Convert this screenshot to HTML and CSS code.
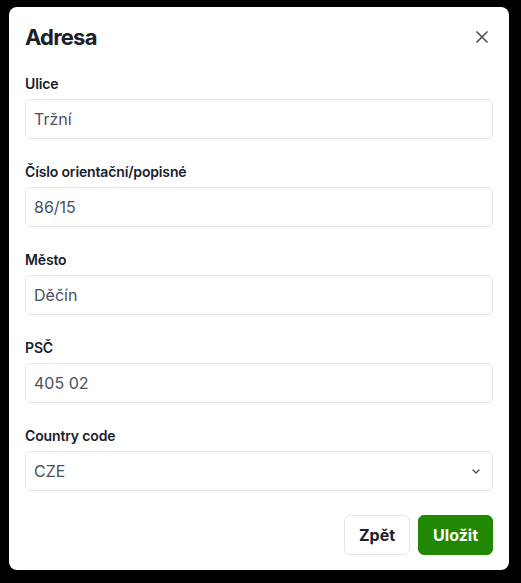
FILE: index.html
```html
<!DOCTYPE html>
<html lang="cs">
<head>
<meta charset="utf-8">
<link rel="stylesheet" href="styles.css">
</head>
<body>
<div class="modal">
  <div class="header">
    <h1 class="title">Adresa</h1>
    <button class="close" type="button" aria-label="Zavřít">
      <svg width="12" height="12" viewBox="0 0 12 12"><path d="M1 1L11 11M11 1L1 11" stroke="#4b5563" stroke-width="1.7" stroke-linecap="round"/></svg>
    </button>
  </div>
  <form class="form">
    <div class="field">
      <label class="label">Ulice</label>
      <div class="input">Tržní</div>
    </div>
    <div class="field">
      <label class="label">Číslo orientační/popisné</label>
      <div class="input">86/15</div>
    </div>
    <div class="field">
      <label class="label">Město</label>
      <div class="input">Děčín</div>
    </div>
    <div class="field">
      <label class="label">PSČ</label>
      <div class="input">405 02</div>
    </div>
    <div class="field">
      <label class="label">Country code</label>
      <div class="input select">
        <span>CZE</span>
        <svg class="chev" width="8" height="5" viewBox="0 0 8 5"><path d="M1 1L4 4L7 1" fill="none" stroke="#4b5563" stroke-width="1.4" stroke-linecap="round" stroke-linejoin="round"/></svg>
      </div>
    </div>
    <div class="actions">
      <button type="button" class="btn btn-outline">Zpět</button>
      <button type="button" class="btn btn-primary">Uložit</button>
    </div>
  </form>
</div>
</body>
</html>
```

FILE: styles.css
```css
* { box-sizing: border-box; }
html, body { margin: 0; padding: 0; background: #000; }
body {
  font-family: Inter, "Noto Sans", sans-serif;
  padding: 7px 0 0 9px;
  height: 583px;
  overflow: hidden;
}
.modal {
  width: 500px;
  height: 563px;
  background: #fff;
  border-radius: 8px;
  padding: 16px 16px 15px;
  display: flex;
  flex-direction: column;
}
.header {
  display: flex;
  align-items: center;
  justify-content: space-between;
}
.title {
  margin: 0;
  font-size: 22px;
  line-height: 28px;
  font-weight: 700;
  color: #1a202c;
  letter-spacing: -0.8px;
}
.close {
  border: 0;
  background: none;
  padding: 0;
  width: 22px;
  height: 24px;
  display: flex;
  align-items: center;
  justify-content: center;
}
.form {
  margin-top: 23px;
  display: flex;
  flex-direction: column;
  gap: 23px;
}
.field {
  display: flex;
  flex-direction: column;
  gap: 5px;
}
.label {
  font-size: 14px;
  line-height: 20px;
  font-weight: 600;
  color: #1a202c;
  letter-spacing: -0.15px;
}
.input {
  height: 40px;
  border: 1px solid #e2e5ee;
  border-radius: 6px;
  padding: 0 8px;
  display: flex;
  align-items: center;
  font-size: 16px;
  color: #4a5160;
}
.select {
  justify-content: space-between;
  padding-right: 12px;
}
.actions {
  margin-top: 1px;
  display: flex;
  justify-content: flex-end;
  gap: 8px;
}
.btn {
  height: 40px;
  padding: 0 14px;
  border-radius: 6px;
  font-family: inherit;
  font-size: 16px;
  font-weight: 700;
}
.btn-outline {
  background: #fff;
  border: 1px solid #e2e5ee;
  color: #1a202c;
}
.btn-primary {
  background: #208700;
  border: 1px solid #208700;
  color: #fff;
}
```
